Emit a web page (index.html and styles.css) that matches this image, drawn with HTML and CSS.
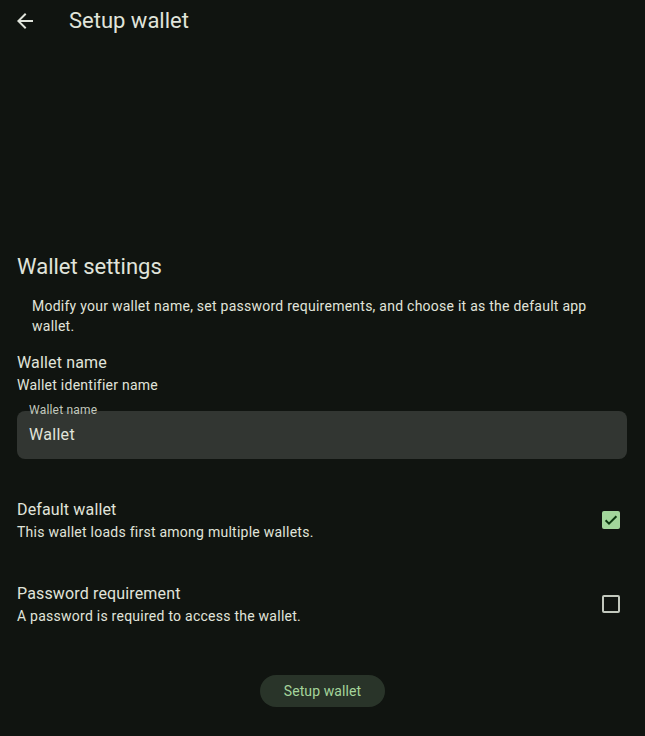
FILE: index.html
```html
<!DOCTYPE html>
<html lang="en">
<head>
<meta charset="utf-8">
<title>Setup wallet</title>
<link rel="stylesheet" href="styles.css">
</head>
<body>
<header class="topbar">
  <button class="back" aria-label="Back">
    <svg viewBox="0 0 24 24" width="24" height="24"><path d="M20 11H7.83l5.59-5.59L12 4l-8 8 8 8 1.41-1.41L7.83 13H20v-2z" fill="currentColor"/></svg>
  </button>
  <h1 class="title">Setup wallet</h1>
</header>
<main class="content">
  <h2 class="section-title">Wallet settings</h2>
  <p class="description">Modify your wallet name, set password requirements, and choose it as the default app wallet.</p>

  <div class="field-group">
    <div class="item-title">Wallet name</div>
    <div class="item-sub">Wallet identifier name</div>
  </div>
  <div class="textfield">
    <span class="tf-label">Wallet name</span>
    <span class="tf-value">Wallet</span>
  </div>

  <div class="row row-first">
    <div class="row-text">
      <div class="item-title">Default wallet</div>
      <div class="item-sub">This wallet loads first among multiple wallets.</div>
    </div>
    <span class="checkbox checked">
      <svg viewBox="0 0 18 18" width="18" height="18"><path d="M3.6 9.3l3.4 3.3 7.4-7.3" fill="none" stroke="currentColor" stroke-width="2"/></svg>
    </span>
  </div>

  <div class="row row-second">
    <div class="row-text">
      <div class="item-title">Password requirement</div>
      <div class="item-sub">A password is required to access the wallet.</div>
    </div>
    <span class="checkbox"></span>
  </div>

  <div class="actions">
    <button class="tonal-btn">Setup wallet</button>
  </div>
</main>
</body>
</html>
```
FILE: styles.css
```css
html, body {
  margin: 0;
  padding: 0;
  background: #101410;
  color: #e0e4db;
  font-family: Roboto, "Noto Sans", sans-serif;
}
body {
  width: 645px;
  min-height: 736px;
}
.topbar {
  height: 42px;
  display: flex;
  align-items: center;
}
.back {
  margin-left: 13px;
  width: 24px;
  height: 24px;
  padding: 0;
  border: 0;
  background: none;
  color: #e0e4db;
  display: flex;
}
.title {
  margin: 0 0 0 32px;
  font-size: 22px;
  font-weight: 400;
  line-height: 28px;
}
.content {
  padding: 0 18px 0 17px;
  display: flex;
  flex-direction: column;
}
.section-title {
  margin: 211px 0 0;
  font-size: 22px;
  font-weight: 400;
  line-height: 28px;
}
.description {
  margin: 15px 0 0;
  padding: 0 15px;
  font-size: 14px;
  line-height: 20px;
  letter-spacing: 0.25px;
}
.field-group {
  margin-top: 15px;
}
.item-title {
  font-size: 16px;
  line-height: 24px;
  letter-spacing: 0.15px;
}
.item-sub {
  font-size: 14px;
  line-height: 20px;
  letter-spacing: 0.25px;
}
.textfield {
  position: relative;
  margin-top: 16px;
  height: 48px;
  background: #323632;
  border-radius: 8px;
  display: flex;
  align-items: center;
  padding-left: 12px;
}
.tf-label {
  position: absolute;
  left: 12px;
  top: -9px;
  font-size: 12px;
  line-height: 16px;
  color: #c2c8bd;
  letter-spacing: 0.2px;
}
.tf-value {
  font-size: 16px;
  line-height: 24px;
  letter-spacing: 0.3px;
}
.row {
  display: flex;
  align-items: center;
  justify-content: space-between;
}
.row-first {
  margin-top: 39px;
}
.row-second {
  margin-top: 40px;
}
.checkbox {
  width: 18px;
  height: 18px;
  box-sizing: border-box;
  border: 2px solid #c2c8bd;
  border-radius: 2px;
  margin-right: 7px;
  display: flex;
}
.checkbox.checked {
  border: 0;
  background: #a2d69b;
  color: #0b380f;
}
.actions {
  margin-top: 49px;
  display: flex;
  justify-content: center;
}
.tonal-btn {
  height: 32px;
  padding: 0 24px;
  border: 0;
  border-radius: 16px;
  background: #293429;
  color: #a5d49b;
  font-family: Roboto, "Noto Sans", sans-serif;
  font-size: 14px;
  letter-spacing: 0.1px;
  margin-left: 1px;
}
```
